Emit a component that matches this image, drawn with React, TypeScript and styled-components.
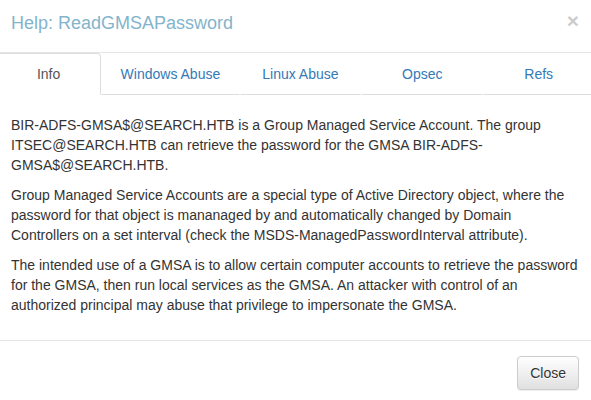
import React, { useState } from "react";
import styled, { createGlobalStyle } from "styled-components";

const Global = createGlobalStyle`
  html, body { margin: 0; padding: 0; overflow: hidden; background: #fff; }
  body { font-family: "Liberation Sans", Arial, Helvetica, sans-serif; font-size: 14px; line-height: 1.42857143; color: #333; }
  * { box-sizing: border-box; }
`;

const Modal = styled.div`
  width: 600px;
  margin: -5px 0 0 -5px;
  background: #fff;
  border: 1px solid rgba(0, 0, 0, 0.2);
  border-radius: 6px;
`;

const Header = styled.div`
  padding: 15px;
  border-bottom: 1px solid #e5e5e5;
  display: flex;
  align-items: flex-start;
  justify-content: space-between;
`;

const Title = styled.h4`
  margin: 0;
  font-size: 18px;
  font-weight: 500;
  line-height: 1.42857143;
  color: #83b4cb;
`;

const CloseX = styled.button`
  margin-top: -1px;
  padding: 0;
  border: 0;
  background: transparent;
  font-family: "Liberation Sans", Arial, sans-serif;
  font-size: 21px;
  font-weight: 700;
  line-height: 1;
  color: #000;
  opacity: 0.2;
  cursor: pointer;
`;

const Tabs = styled.ul`
  display: table;
  width: 100%;
  margin: 0;
  padding: 0;
  list-style: none;
`;

const Tab = styled.li`
  display: table-cell;
  width: 1%;
`;

const TabLink = styled.a<{ $active?: boolean }>`
  display: block;
  padding: 10px 15px;
  text-align: center;
  text-decoration: none;
  line-height: 1.42857143;
  border: 1px solid ${(p) => (p.$active ? "#ddd" : "transparent")};
  border-bottom: 1px solid ${(p) => (p.$active ? "#fff" : "#ddd")};
  border-radius: 4px 4px 0 0;
  color: ${(p) => (p.$active ? "#555" : "#337ab7")};
  background: #fff;
  cursor: pointer;
`;

const Body = styled.div`
  padding: 20px 15px 15px;
`;

const P = styled.p`
  margin: 0 0 10px;
`;

const Footer = styled.div`
  padding: 15px;
  border-top: 1px solid #e5e5e5;
  display: flex;
  justify-content: flex-end;
`;

const Button = styled.button`
  padding: 6px 12px;
  font-family: "Liberation Sans", Arial, sans-serif;
  font-size: 14px;
  line-height: 1.42857143;
  color: #333;
  background-image: linear-gradient(to bottom, #fff 0, #e0e0e0 100%);
  border: 1px solid #ccc;
  border-radius: 4px;
  text-shadow: 0 1px 0 #fff;
  box-shadow: inset 0 1px 0 rgba(255, 255, 255, 0.15), 0 1px 1px rgba(0, 0, 0, 0.075);
  cursor: pointer;
`;

const tabs = ["Info", "Windows Abuse", "Linux Abuse", "Opsec", "Refs"];

export default function App() {
  const [active, setActive] = useState(0);
  return (
    <>
      <Global />
      <Modal>
        <Header>
          <Title>Help: ReadGMSAPassword</Title>
          <CloseX aria-label="Close">×</CloseX>
        </Header>
        <Tabs>
          {tabs.map((t, i) => (
            <Tab key={t}>
              <TabLink $active={i === active} onClick={() => setActive(i)}>
                {t}
              </TabLink>
            </Tab>
          ))}
        </Tabs>
        <Body>
          <P>
            BIR-ADFS-GMSA$@SEARCH.HTB is a Group Managed Service Account. The group ITSEC@SEARCH.HTB can
            retrieve the password for the GMSA BIR-ADFS-GMSA$@SEARCH.HTB.
          </P>
          <P>
            Group Managed Service Accounts are a special type of Active Directory object, where the password for
            that object is mananaged by and automatically changed by Domain Controllers on a set interval (check the
            MSDS-ManagedPasswordInterval attribute).
          </P>
          <P>
            The intended use of a GMSA is to allow certain computer accounts to retrieve the password for the GMSA,
            then run local services as the GMSA. An attacker with control of an authorized principal may abuse that
            privilege to impersonate the GMSA.
          </P>
        </Body>
        <Footer>
          <Button>Close</Button>
        </Footer>
      </Modal>
    </>
  );
}
